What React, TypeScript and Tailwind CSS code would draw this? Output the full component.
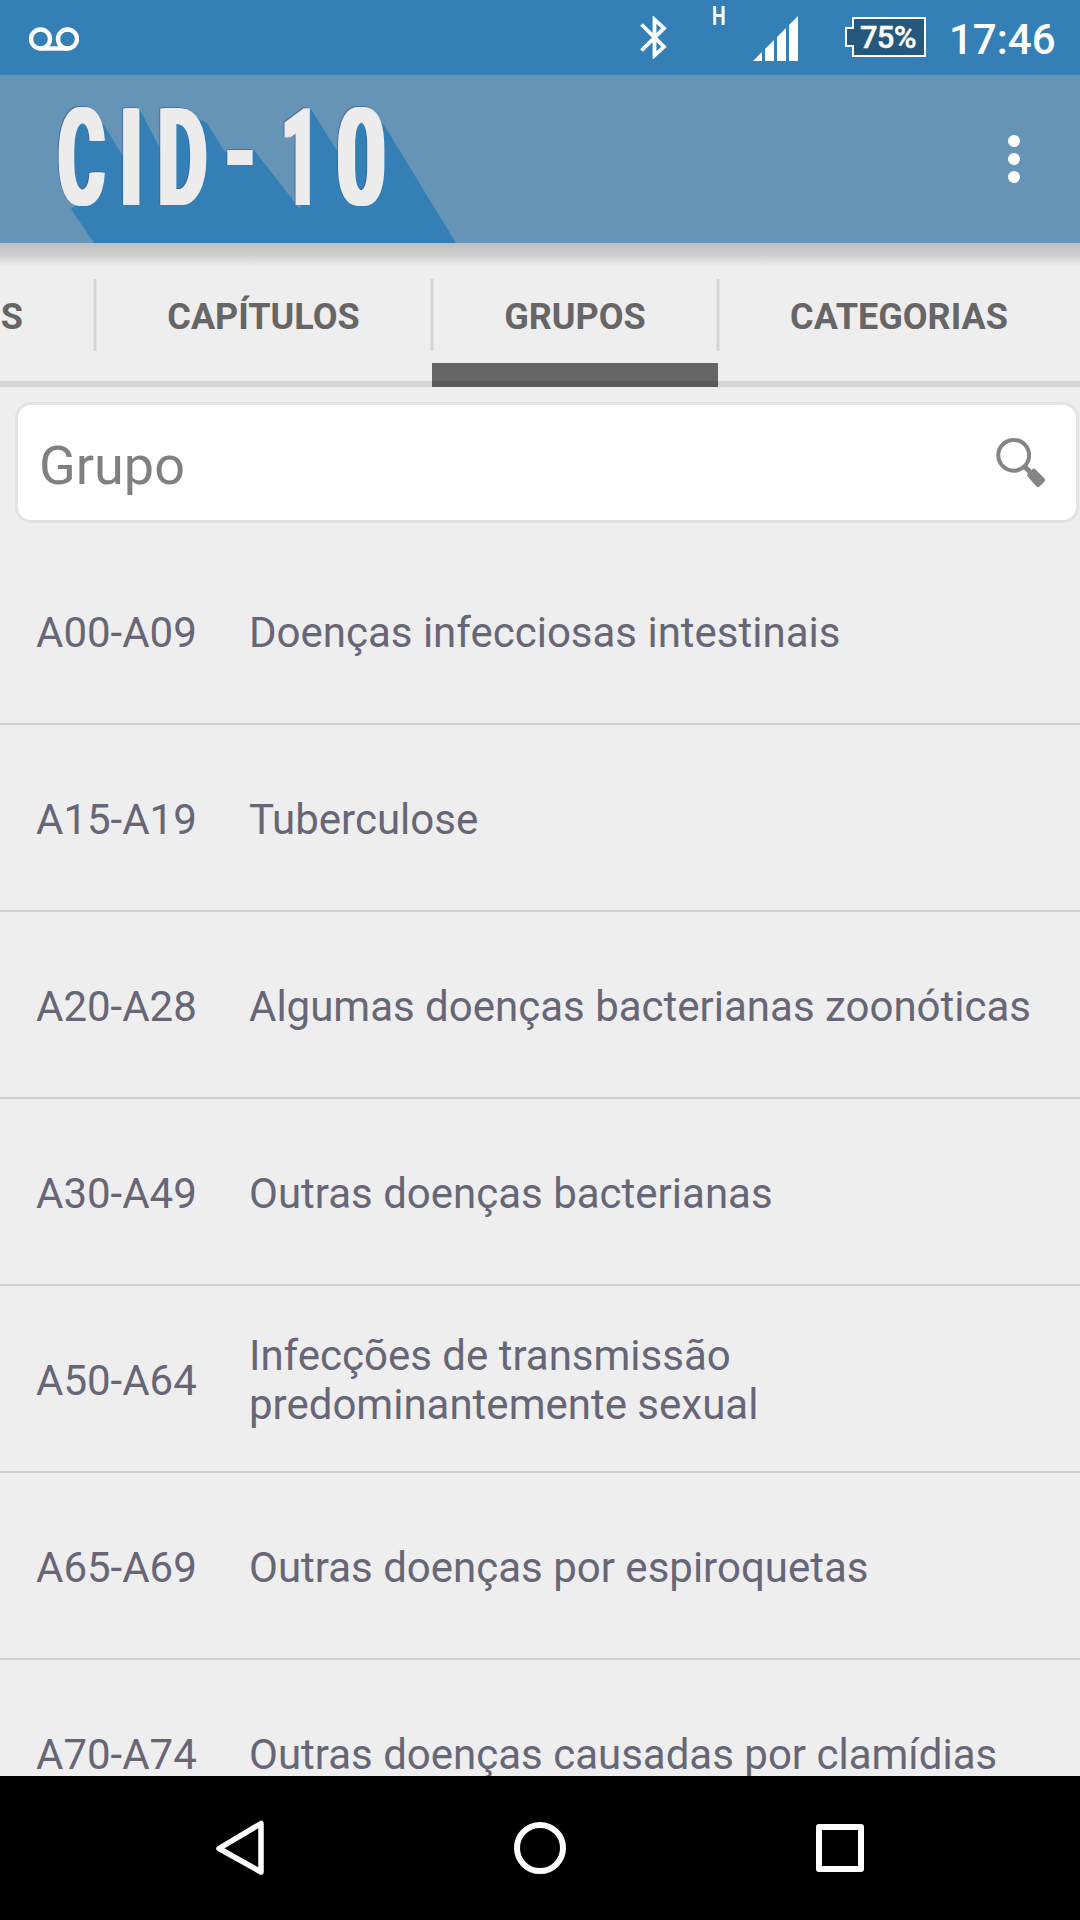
const groups = [
  { code: 'A00-A09', name: 'Doenças infecciosas intestinais' },
  { code: 'A15-A19', name: 'Tuberculose' },
  { code: 'A20-A28', name: 'Algumas doenças bacterianas zoonóticas' },
  { code: 'A30-A49', name: 'Outras doenças bacterianas' },
  { code: 'A50-A64', name: 'Infecções de transmissão predominantemente sexual' },
  { code: 'A65-A69', name: 'Outras doenças por espiroquetas' },
  { code: 'A70-A74', name: 'Outras doenças causadas por clamídias' },
];

function StatusBar() {
  return (
    <div className="flex h-[75px] shrink-0 items-start bg-[#3480b6] text-white">
      <svg className="mt-[27px] ml-[29px] h-[24px] w-[50px]" viewBox="0 0 50 24" fill="none" stroke="currentColor" strokeWidth="4.4">
        <circle cx="11.5" cy="12" r="9.5" />
        <circle cx="38.5" cy="12" r="9.5" />
        <path d="M11.5 21.5h27" />
      </svg>
      <svg className="mt-[16px] ml-[561px] h-[43px] w-[27px]" viewBox="0 0 27 43" fill="none" stroke="currentColor" strokeWidth="3.8">
        <path d="M1.5 8.5 24 30.8 14.5 39.5V3.5L24 12.2 1.5 34.5" />
      </svg>
      <span className="mt-[2px] ml-[45px] w-[20px] origin-left scale-x-[0.78] text-[25px] leading-[29px] font-bold">H</span>
      <svg className="mt-[16px] ml-[21px] h-[45px] w-[45px]" viewBox="0 0 45 45" fill="currentColor">
        <path d="M0 45 9 36V45ZM12 45V33L21 24V45ZM24 45V21L33 12V45ZM36 45V9L45 0V45Z" />
      </svg>
      <div className="relative mt-[17px] ml-[47px] h-[40px] w-[81px]">
        <svg className="h-[40px] w-[81px]" viewBox="0 0 81 40" fill="#24587d" stroke="currentColor" strokeWidth="2">
          <path d="M8 1H80V39H8V29H1V11H8Z" />
        </svg>
        <span className="absolute top-[3px] left-[15px] text-[31px] leading-[36px] font-medium tracking-[-0.8px] [-webkit-text-stroke:0.4px_white]">75%</span>
      </div>
      <span className="mt-[15px] ml-[23px] text-[42px] leading-[49px] font-medium">17:46</span>
    </div>
  );
}

const letters = [
  { char: 'C', x: 59, y: 204.5, width: 46.5 },
  { char: 'I', x: 123.5, y: 204.5, width: 16 },
  { char: 'D', x: 160.5, y: 204.5, width: 47 },
  { char: '-', x: 226, y: 199, width: 29 },
  { char: '1', x: 283.5, y: 204.5, width: 28 },
  { char: '0', x: 338, y: 204.5, width: 47 },
];

// side bearings and ink widths of the bold glyphs, in em
const ink: Record<string, [number, number]> = {
  C: [0.039, 0.588],
  I: [0.07, 0.146],
  D: [0.057, 0.56],
  '-': [0.03, 0.33],
  '1': [0.055, 0.356],
  '0': [0.041, 0.491],
};

// how far each letter is widened to both sides
const SPREAD = 2.4;

function Logo() {
  return (
    <svg className="h-[168px] w-[480px]" viewBox="0 75 480 168">
      <path
        d="M71 209 94 243H456L384 125 370 114 350 125V172L337 151 311 109 300 120V209L254 150 225 152 207 123 190 114 170 114V168L139 108 130 112V168L104 125 80 118 68 130V185L80 202Z"
        fill="#3480b6"
      />
      <g
        className="[filter:drop-shadow(2.4px_0_0_#ececec)_drop-shadow(-2.4px_0_0_#ececec)_drop-shadow(-1px_-1px_0.5px_rgba(60,85,135,0.55))]"
        fill="#ececec"
        fontSize="135"
        fontWeight="700"
      >
        {letters.map(({ char, x, y, width }) => {
          const scale = (width - 2 * SPREAD) / (ink[char][1] * 135);
          return (
            <text key={char} transform={`translate(${x + SPREAD - ink[char][0] * 135 * scale} ${y}) scale(${scale} 1)`}>
              {char}
            </text>
          );
        })}
      </g>
    </svg>
  );
}

function ActionBar() {
  return (
    <header className="relative flex h-[168px] shrink-0 justify-between bg-[#6694b6]">
      <Logo />
      <div className="mt-[60px] mr-[60px] flex flex-col gap-[6px]">
        <span className="size-[12px] rounded-full bg-white" />
        <span className="size-[12px] rounded-full bg-white" />
        <span className="size-[12px] rounded-full bg-white" />
      </div>
      <div className="absolute top-full left-0 h-[24px] w-full bg-linear-to-b from-[#bebebe] via-[#cfcfcf] to-[#eeeeee]" />
    </header>
  );
}

function Divider() {
  return <span className="mt-[36px] -mx-[2px] h-[72px] w-[4px] shrink-0 border-x border-[#e3e3e3] bg-[#d5d5d5]" />;
}

function Tabs() {
  return (
    <nav className="flex h-[144px] shrink-0 overflow-hidden border-b-[6px] border-[#d6d6d6] text-[36px] leading-[42px] font-bold text-[#666]">
      <div className="flex w-[95px] shrink-0 justify-end pt-[53px] pr-[72px]">S</div>
      <Divider />
      <div className="w-[337px] shrink-0 pt-[53px] text-center">CAPÍTULOS</div>
      <Divider />
      <div className="w-[286px] shrink-0 pt-[53px] text-center">GRUPOS</div>
      <Divider />
      <div className="w-[362px] shrink-0 pt-[53px] text-center">CATEGORIAS</div>
    </nav>
  );
}

function SearchBox() {
  return (
    <div className="mt-[15px] mr-px ml-[15px] flex h-[121px] shrink-0 items-start rounded-[16px] border-[3px] border-[#e3e3e3] bg-white">
      <span className="mt-[29px] ml-[21px] flex-1 text-[54px] leading-[63px] text-[#808080]">Grupo</span>
      <svg className="mt-[31px] mr-[30px] h-[52px] w-[52px]" viewBox="0 0 52 52" fill="none" stroke="#858585">
        <circle cx="19.7" cy="19.3" r="15.4" strokeWidth="4" />
        <path d="M31 31 38 38" strokeWidth="5" />
        <path d="M35.8 39.2 39.8 35.2 48.5 44 44 48.5Z" fill="#858585" strokeWidth="5" strokeLinejoin="round" />
      </svg>
    </div>
  );
}

function NavigationBar() {
  return (
    <div className="flex h-[144px] shrink-0 items-center bg-black pl-[210px] text-white">
      <svg className="size-[60px]" viewBox="0 0 60 60" fill="none" stroke="currentColor" strokeWidth="5.5" strokeLinejoin="round">
        <path d="M51 5.5V54L9 30.5Z" />
      </svg>
      <svg className="ml-[240px] size-[60px]" viewBox="0 0 60 60" fill="none" stroke="currentColor" strokeWidth="6">
        <circle cx="30" cy="30" r="23" />
      </svg>
      <svg className="ml-[240px] size-[60px]" viewBox="0 0 60 60" fill="none" stroke="currentColor" strokeWidth="6" strokeLinejoin="round">
        <path d="M9 9H51V51H9Z" />
      </svg>
    </div>
  );
}

export default function App() {
  return (
    <div className="flex h-[1920px] w-[1080px] flex-col overflow-hidden bg-[#eee] font-[Roboto,sans-serif]">
      <StatusBar />
      <ActionBar />
      <div className="relative shrink-0">
        <Tabs />
        {/* selected tab indicator */}
        <div className="absolute bottom-0 left-[432px] h-[24px] w-[286px] border-b-[6px] border-[#5b5b5b] bg-[#666]" />
      </div>
      <SearchBox />
      <ul className="mt-[15px] min-h-0 flex-1 overflow-hidden text-[42px] leading-[49px] text-[#676676]">
        {groups.map((group) => (
          <li key={group.code} className="flex h-[187px] items-center border-b-2 border-[#cfcfcf] pt-[3px] pl-[36px]">
            <span className="w-[213px] shrink-0">{group.code}</span>
            <span className="w-[790px]">{group.name}</span>
          </li>
        ))}
      </ul>
      <NavigationBar />
    </div>
  );
}
